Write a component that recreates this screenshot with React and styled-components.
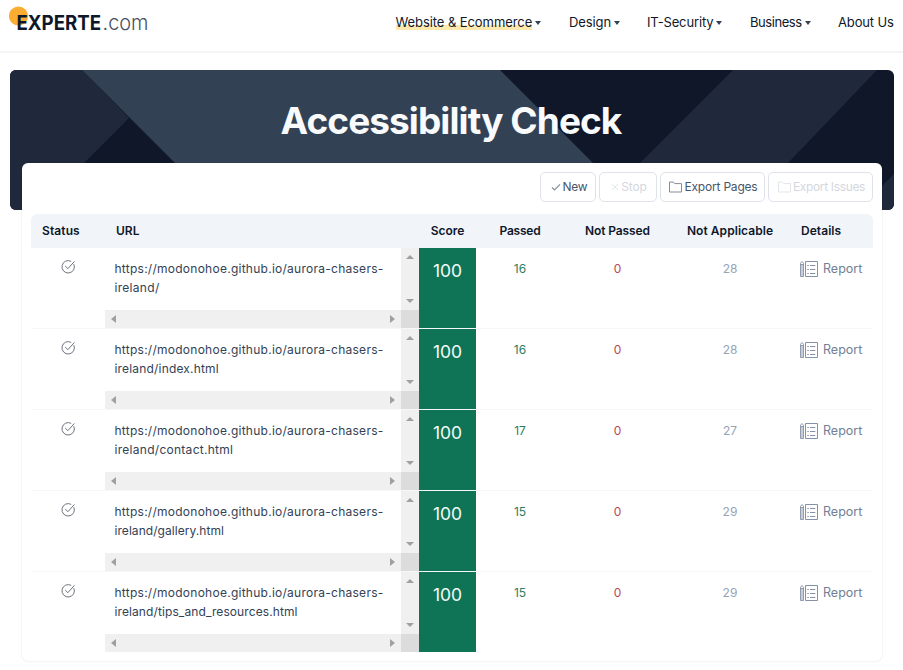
import React from "react";
import styled, { createGlobalStyle, css } from "styled-components";

const Global = createGlobalStyle`
  * { box-sizing: border-box; }
  body {
    margin: 0;
    background: #fff;
    color: #0f172a;
    font-family: Inter, "Liberation Sans", sans-serif;
  }
`;

const Page = styled.div`
  height: 670px;
  overflow: hidden;
`;

const Header = styled.header`
  display: flex;
  justify-content: space-between;
  height: 53px;
  padding-left: 9px;
  border-bottom: 2px solid #f5f5f6;
`;

const Logo = styled.svg`
  display: block;
  width: 145px;
  height: 40px;
`;

const Nav = styled.nav`
  display: flex;
  padding: 14px 9px 0 0;
`;

const NavItem = styled.div`
  display: flex;
  align-items: center;
  width: ${(p) => p.$width}px;
  height: 17px;
  font-size: 13px;
  line-height: 17px;
  letter-spacing: ${(p) => p.$track || 0}px;
  white-space: nowrap;
`;

const NavLabel = styled.span`
  ${(p) =>
    p.$active &&
    css`
      background: linear-gradient(transparent 11px, #fde9ae 11px, #fde9ae 16px, transparent 16px);
    `}
`;

const Caret = styled.i`
  margin-left: 3px;
  border: 3px solid transparent;
  border-top: 4px solid #334155;
  border-bottom: 0;
`;

const Hero = styled.section`
  display: grid;
  width: 884px;
  height: 140px;
  margin: 17px 0 0 10px;
  border-radius: 6px;
  overflow: hidden;

  > * {
    grid-area: 1 / 1;
  }
`;

const Backdrop = styled.svg`
  display: block;
  width: 884px;
  height: 140px;
`;

const Title = styled.h1`
  margin: 0;
  padding: 28px 2px 0 0;
  z-index: 1;
  color: #f8fafc;
  text-align: center;
  font-size: 37px;
  line-height: 46px;
  font-weight: 700;
  letter-spacing: ${(p) => p.$track}px;
  white-space: nowrap;
`;

const Card = styled.main`
  position: relative;
  width: 860px;
  height: 498px;
  margin: -47px 0 0 22px;
  padding: 9px 9px 0;
  background: #fff;
  border-radius: 6px;
  box-shadow: 0 0 2px rgba(15, 23, 42, 0.16);
`;

const Toolbar = styled.div`
  display: flex;
  justify-content: flex-end;
  gap: 3px;
  height: 42px;
`;

const Button = styled.button`
  display: flex;
  align-items: center;
  justify-content: center;
  gap: 2px;
  width: ${(p) => p.$width}px;
  height: 30px;
  padding: 0 0 0 2px;
  border: 1px solid #dfe3e9;
  border-radius: 5px;
  background: #fff;
  color: ${(p) => (p.disabled ? "#d3d8df" : "#475569")};
  font: 12px/16px Inter, sans-serif;
  letter-spacing: ${(p) => p.$track || 0}px;
  white-space: nowrap;

  svg {
    flex: none;
    color: ${(p) => (p.disabled ? "#e2e5ea" : "#858c97")};
  }
`;

const Row = styled.div`
  display: grid;
  grid-template-columns: 74px 314px 57px 88px 107px 118px 84px;
`;

const HeadRow = styled(Row)`
  height: 34px;
  border-radius: 6px 6px 0 0;
  background: #f1f5f9;
  font-size: 12px;
  line-height: 34px;
  font-weight: 600;
  white-space: nowrap;
`;

const HeadCell = styled.div`
  padding-left: ${(p) => p.$indent || 0}px;
  text-align: ${(p) => (p.$indent ? "left" : "center")};
  letter-spacing: ${(p) => p.$track || 0}px;
`;

const BodyRow = styled(Row)`
  height: 81px;
  border-bottom: 1px solid #f5f7f9;

  &:last-child {
    height: 80px;
    border-bottom: 0;
  }
`;

const Status = styled.div`
  padding: 11px 0 0 29.5px;
`;

const UrlBox = styled.div`
  display: grid;
  grid-template: 62px 18px / 296px 18px;
`;

const Url = styled.div`
  padding: 11px 0 0 9.5px;
  color: #334155;
  font-size: 12px;
  white-space: nowrap;
`;

const UrlLine = styled.div`
  line-height: 19px;
  letter-spacing: ${(p) => p.$track}px;
`;

const Scrollbar = styled.div`
  display: flex;
  flex-direction: ${(p) => (p.$vertical ? "column" : "row")};
  align-items: center;
  justify-content: space-between;
  padding: ${(p) => (p.$vertical ? "7px 0" : "0 6px")};
  background: #f0f0f0;
`;

const Arrow = styled.svg`
  display: block;
  flex: none;
  fill: #a0a0a0;
`;

const Corner = styled.div`
  background: #dcdcdc;
`;

const Score = styled.div`
  padding-top: 11px;
  background: #0f7456;
  color: #f3fbf7;
  text-align: center;
  font-size: 17.5px;
  line-height: 24px;
`;

const Count = styled.div`
  padding-top: 13px;
  color: ${(p) => p.$color};
  text-align: center;
  font-size: 12px;
  line-height: 16px;
`;

const Report = styled.div`
  display: flex;
  align-items: flex-start;
  gap: 5px;
  padding: 12px 0 0 11px;
  color: #718096;
  font-size: 12.5px;
  line-height: 18px;
`;

const arrowShapes = {
  up: [8, 4, "0,4 4,0 8,4"],
  down: [8, 4, "0,0 8,0 4,4"],
  left: [5, 8, "5,0 5,8 0,4"],
  right: [5, 8, "0,0 5,4 0,8"],
};

function ScrollArrow({ to }) {
  const [w, h, points] = arrowShapes[to];
  return (
    <Arrow width={w} height={h}>
      <polygon points={points} />
    </Arrow>
  );
}

function CheckIcon() {
  return (
    <svg width="10" height="8" viewBox="0 0 10 8" fill="none" stroke="currentColor" strokeWidth="1.2">
      <path d="M1 4.4 3.5 7 9 1.3" />
    </svg>
  );
}

function CrossIcon() {
  return (
    <svg width="8" height="8" viewBox="0 0 8 8" fill="none" stroke="currentColor">
      <path d="m1 1 6 6M7 1 1 7" />
    </svg>
  );
}

function FolderIcon() {
  return (
    <svg width="13" height="12" viewBox="0 0 13 12" fill="none" stroke="currentColor">
      <path d="M.5 11V1h3.8l1.4 1.6h6.8V11Z" />
    </svg>
  );
}

function StatusIcon() {
  return (
    <svg width="15" height="15" viewBox="0 0.8 15 15" fill="none" stroke="#6f747d">
      <path d="M12.8 5A6.2 6.2 0 1 1 10.2 2.2" />
      <path d="M4.2 6.8 6.9 9.5 13.4 2.2" />
    </svg>
  );
}

function ReportIcon() {
  return (
    <svg width="18" height="18" viewBox="0 0 18 18" fill="none" stroke="#8492a6">
      <path d="M5.5 1.5h12v15h-12Z" />
      <path d="M.5 3.2 2 1.5l1.5 1.7V16.5h-3ZM.5 4.5h3M2 4.5v12" strokeWidth=".9" />
      <path d="M7.3 5.5h1.5M7.3 9.5h1.5M7.3 13.5h1.5M10 5.5h5.3M10 9.5h5.3M10 13.5h5.3" />
    </svg>
  );
}

const rows = [
  { file: "", track: 0.3, passed: 16, skipped: 28 },
  { file: "index.html", track: 0.18, passed: 16, skipped: 28 },
  { file: "contact.html", track: 0.28, passed: 17, skipped: 27 },
  { file: "gallery.html", track: 0.06, passed: 15, skipped: 29 },
  { file: "tips_and_resources.html", track: 0.1, passed: 15, skipped: 29 },
];

export default function App() {
  return (
    <Page>
      <Global />
      <Header>
        <Logo viewBox="0 0 145 40">
          <circle cx="9.5" cy="16" r="9.6" fill="#fbad32" />
          <text x="7.5" y="29.5" fontSize="19.5" fontWeight="700" fill="#0f172a" textLength="84.5" lengthAdjust="spacingAndGlyphs">
            EXPERTE
          </text>
          <text x="93.5" y="29.5" fontSize="20.5" fontWeight="300" fill="#475062" textLength="46" lengthAdjust="spacingAndGlyphs">
            .com
          </text>
        </Logo>
        <Nav>
          <NavItem $width={173.5} $track={-0.08}>
            <NavLabel $active>Website &amp; Ecommerce</NavLabel>
            <Caret />
          </NavItem>
          <NavItem $width={78} $track={-0.1}>
            <NavLabel>Design</NavLabel>
            <Caret />
          </NavItem>
          <NavItem $width={103} $track={-0.14}>
            <NavLabel>IT-Security</NavLabel>
            <Caret />
          </NavItem>
          <NavItem $width={88} $track={-0.45}>
            <NavLabel>Business</NavLabel>
            <Caret />
          </NavItem>
          <NavItem $width={56} $track={-0.15}>
            <NavLabel>About Us</NavLabel>
          </NavItem>
        </Nav>
      </Header>

      <Hero>
        <Backdrop viewBox="0 0 884 140">
          <rect width="884" height="140" fill="#0f1729" />
          <path d="M0 0H72L119 48 27 140H0Z" fill="#1f293b" />
          <path d="M72 0H490L630 140H212Z" fill="#334155" />
          <path d="M723 0H867L733 140H583Z" fill="#1f293b" />
          <path d="M884 104V140H848Z" fill="#1f293b" />
        </Backdrop>
        <Title $track={-0.92}>Accessibility Check</Title>
      </Hero>

      <Card>
        <Toolbar>
          <Button $width={56} $track={-0.25}>
            <CheckIcon />
            New
          </Button>
          <Button $width={58} $track={-0.15} disabled>
            <CrossIcon />
            Stop
          </Button>
          <Button $width={105} $track={-0.2}>
            <FolderIcon />
            Export Pages
          </Button>
          <Button $width={105} $track={-0.35} disabled>
            <FolderIcon />
            Export Issues
          </Button>
        </Toolbar>
        <HeadRow>
          <HeadCell $indent={11} $track={0.1}>Status</HeadCell>
          <HeadCell $indent={11}>URL</HeadCell>
          <HeadCell>Score</HeadCell>
          <HeadCell $track={-0.2}>Passed</HeadCell>
          <HeadCell $track={-0.1}>Not Passed</HeadCell>
          <HeadCell $track={0.05}>Not Applicable</HeadCell>
          <HeadCell $indent={12} $track={0.05}>Details</HeadCell>
        </HeadRow>
        <div>
          {rows.map(({ file, track, passed, skipped }) => (
            <BodyRow key={file}>
              <Status>
                <StatusIcon />
              </Status>
              <UrlBox>
                <Url>
                  <UrlLine $track={0.26}>https://modonohoe.github.io/aurora-chasers-</UrlLine>
                  <UrlLine $track={track}>ireland/{file}</UrlLine>
                </Url>
                <Scrollbar $vertical>
                  <ScrollArrow to="up" />
                  <ScrollArrow to="down" />
                </Scrollbar>
                <Scrollbar>
                  <ScrollArrow to="left" />
                  <ScrollArrow to="right" />
                </Scrollbar>
                <Corner />
              </UrlBox>
              <Score>100</Score>
              <Count $color="#2f7d5f">{passed}</Count>
              <Count $color="#b84a55">0</Count>
              <Count $color="#94a3b8">{skipped}</Count>
              <Report>
                <ReportIcon />
                Report
              </Report>
            </BodyRow>
          ))}
        </div>
      </Card>
    </Page>
  );
}
